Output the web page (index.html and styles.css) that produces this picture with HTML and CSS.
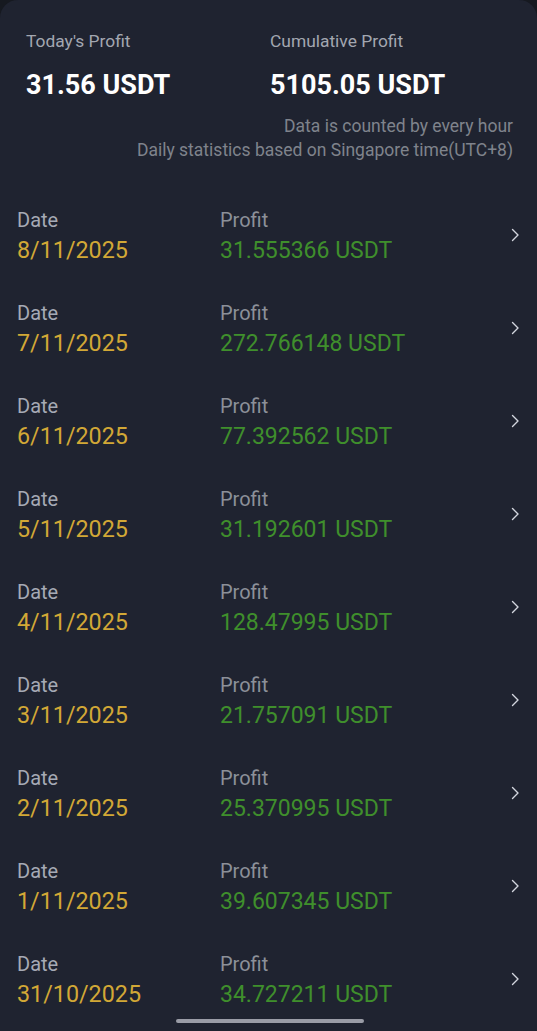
FILE: index.html
```html
<!doctype html>
<html lang="en">
 <head>
  <meta charset="UTF-8">
  <meta name="viewport" content="width=device-width, initial-scale=1.0">
  <title>Profit Records</title>
  <link rel="stylesheet" href="styles.css">
 </head>
 <body>
  <div class="sheet">
   <div class="summary">
    <div class="summary-item">
     <div class="summary-label">Today's Profit</div>
     <div class="summary-value">31.56 USDT</div>
    </div>
    <div class="summary-item">
     <div class="summary-label">Cumulative Profit</div>
     <div class="summary-value">5105.05 USDT</div>
    </div>
   </div>
   <div class="notes">
    <div>Data is counted by every hour</div>
    <div>Daily statistics based on Singapore time(UTC+8)</div>
   </div>

   <div class="records" id="records"></div>
  </div>
  <div class="home-bar"></div>

  <script>
    // daily records, newest first
    const records = [
      ["8/11/2025", "31.555366"],
      ["7/11/2025", "272.766148"],
      ["6/11/2025", "77.392562"],
      ["5/11/2025", "31.192601"],
      ["4/11/2025", "128.47995"],
      ["3/11/2025", "21.757091"],
      ["2/11/2025", "25.370995"],
      ["1/11/2025", "39.607345"],
      ["31/10/2025", "34.727211"]
    ];

    const list = document.getElementById('records');
    records.forEach(function(r) {
      const row = document.createElement('div');
      row.className = 'record';
      row.innerHTML =
        '<div class="col col-date"><div class="col-label">Date</div><div class="col-date-value">' + r[0] + '</div></div>' +
        '<div class="col col-profit"><div class="col-label profit-label">Profit</div><div class="col-profit-value">' + r[1] + ' USDT</div></div>' +
        '<svg class="chevron" width="10" height="16" viewBox="0 0 10 16"><path d="M2.5 2.5l5.5 5.5-5.5 5.5" fill="none" stroke="#d3d6de" stroke-width="1.4" stroke-linecap="round" stroke-linejoin="round"/></svg>';
      list.appendChild(row);
    });
  </script>
 </body>
</html>
```

FILE: styles.css
```css
html, body {
  margin: 0;
  padding: 0;
}
body {
  font-family: Roboto, "Noto Sans", Arial, sans-serif;
  background-color: #161920;
  color: #fff;
  min-height: 1031px;
}
.sheet {
  background-color: #1f2330;
  border-radius: 18px 18px 0 0;
  min-height: 1031px;
}
.summary {
  display: grid;
  grid-template-columns: 244px 1fr;
  padding: 30px 26px 0;
}
.summary-label {
  font-size: 17.4px;
  line-height: 22px;
  color: #a3a7b0;
}
.summary-value {
  margin-top: 17px;
  font-size: 27px;
  line-height: 32px;
  font-weight: bold;
  color: #fff;
}
.notes {
  margin-top: 13px;
  padding-right: 24px;
  text-align: right;
  font-size: 17.5px;
  line-height: 24px;
  color: #7f838c;
}
.records {
  margin-top: 28px;
}
.record {
  display: flex;
  align-items: center;
  height: 93px;
  padding: 0 17px;
  box-sizing: border-box;
}
.col-date {
  width: 203px;
}
.col-profit {
  flex: 1;
}
.col-label {
  font-size: 20px;
  line-height: 28px;
  color: #a6aab5;
}
.profit-label {
  color: #8c9099;
}
.col-date-value {
  font-size: 23.3px;
  line-height: 33px;
  color: #d2a836;
}
.col-profit-value {
  font-size: 23px;
  line-height: 33px;
  color: #3f8f2c;
}
.chevron {
  margin-top: -4px;
}
.home-bar {
  position: fixed;
  left: 176px;
  bottom: 8px;
  width: 188px;
  height: 4px;
  border-radius: 2px;
  background-color: #9a9ca6;
}
```
